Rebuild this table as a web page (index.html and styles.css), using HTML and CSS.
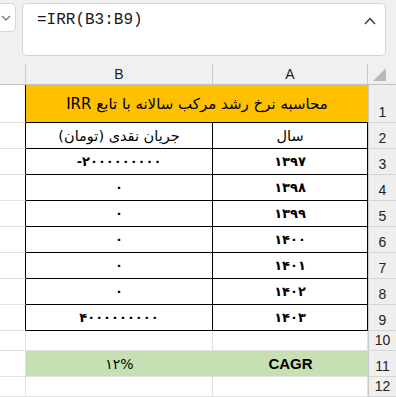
FILE: index.html
```html
<!DOCTYPE html>
<html lang="fa">
<head>
<meta charset="utf-8">
<link rel="stylesheet" href="styles.css">
</head>
<body>
<div class="top">
  <div class="namebox">
    <svg class="chev-down" width="10" height="6" viewBox="0 0 10 6"><path d="M1 1 L5 5 L9 1" fill="none" stroke="#666" stroke-width="1.1"/></svg>
  </div>
  <div class="fx">
    <span class="formula">=IRR(B3:B9)</span>
    <svg class="chev-up" width="12" height="8" viewBox="0 0 12 8"><path d="M1 7 L6 1.5 L11 7" fill="none" stroke="#333" stroke-width="1.3"/></svg>
  </div>
</div>
<div class="sheet">
  <div class="ch"></div><div class="ch">B</div><div class="ch">A</div><div class="ch corner"><span class="tri"></span></div>

  <div class="c edge"></div><div class="title" dir="rtl">محاسبه نرخ رشد مرکب سالانه با تابع IRR</div><div class="rh">1</div>

  <div class="c edge"></div><div class="cell head" dir="rtl">جریان نقدی (تومان)</div><div class="cell head" dir="rtl">سال</div><div class="rh">2</div>
  <div class="c edge"></div><div class="cell num"><span dir="ltr">-۲۰۰۰۰۰۰۰۰۰</span></div><div class="cell num">۱۳۹۷</div><div class="rh">3</div>
  <div class="c edge"></div><div class="cell num">۰</div><div class="cell num">۱۳۹۸</div><div class="rh">4</div>
  <div class="c edge"></div><div class="cell num">۰</div><div class="cell num">۱۳۹۹</div><div class="rh">5</div>
  <div class="c edge"></div><div class="cell num">۰</div><div class="cell num">۱۴۰۰</div><div class="rh">6</div>
  <div class="c edge"></div><div class="cell num">۰</div><div class="cell num">۱۴۰۱</div><div class="rh">7</div>
  <div class="c edge"></div><div class="cell num">۰</div><div class="cell num">۱۴۰۲</div><div class="rh">8</div>
  <div class="c edge"></div><div class="cell num"><span dir="ltr">۴۰۰۰۰۰۰۰۰۰</span></div><div class="cell num">۱۴۰۳</div><div class="rh">9</div>

  <div class="c"></div><div class="c"></div><div class="c"></div><div class="rh">10</div>
  <div class="c"></div><div class="green"><span dir="ltr">۱۲%</span></div><div class="green cagr">CAGR</div><div class="rh">11</div>
  <div class="c"></div><div class="c"></div><div class="c"></div><div class="rh">12</div>
</div>
</body>
</html>
```
FILE: styles.css
```css
* { box-sizing: border-box; }
html, body { margin: 0; padding: 0; }
body {
  width: 396px;
  height: 397px;
  overflow: hidden;
  background: #f0f0f0;
  font-family: "DejaVu Sans", sans-serif;
  color: #000;
}
.top {
  height: 64px;
  display: flex;
  align-items: flex-start;
  padding-top: 3px;
  gap: 6px;
  margin-left: -10px;
}
.namebox {
  width: 26px;
  height: 29px;
  background: #fff;
  border: 1px solid #d6d6d6;
  border-radius: 5px;
  display: flex;
  justify-content: flex-end;
  align-items: center;
  padding-right: 4px;
}
.fx {
  width: 364px;
  height: 53px;
  background: #fff;
  border: 1px solid #d4d4d4;
  border-radius: 5px;
  display: flex;
  justify-content: space-between;
  align-items: flex-start;
  padding: 6px 9px 0 14px;
}
.formula {
  font-family: "Liberation Mono", monospace;
  font-size: 16px;
  line-height: 20px;
  color: #1a1a1a;
}
.chev-up { margin-top: 7px; }
.sheet {
  display: grid;
  grid-template-columns: 26px 187px 155px 28px;
  grid-template-rows: 21px 38px repeat(8, 26px) 20px 26px 20px;
  background: #fff;
}
.ch {
  background: #f0f0f0;
  border-right: 1px solid #c9c9c9;
  border-bottom: 1px solid #c2c2c2;
  font-family: "Liberation Sans", sans-serif;
  font-size: 14px;
  color: #222;
  display: flex;
  align-items: center;
  justify-content: center;
}
.corner {
  border-right: none;
  position: relative;
}
.tri {
  position: absolute;
  right: 10px;
  bottom: 3px;
  width: 0;
  height: 0;
  border-left: 13px solid transparent;
  border-bottom: 13px solid #b8b8b8;
}
.c {
  border-right: 1px solid #e1e1e1;
  border-bottom: 1px solid #e1e1e1;
}
.c.edge { border-right: 1px solid #000; }
.title {
  grid-column: span 2;
  background: #ffc000;
  border-bottom: 1px solid #000;
  display: flex;
  align-items: center;
  justify-content: center;
  font-size: 15px;
}
.cell {
  border-right: 1px solid #000;
  border-bottom: 1px solid #000;
  display: flex;
  align-items: center;
  justify-content: center;
  font-size: 15px;
}
.head { font-size: 14.5px; }
.num { font-weight: bold; font-size: 13px; }
.green {
  background: #c6e0b4;
  border-bottom: 1px solid #e1e1e1;
  display: flex;
  align-items: center;
  justify-content: center;
  font-size: 14px;
}
.cagr {
  font-family: "Liberation Sans", sans-serif;
  font-weight: bold;
  font-size: 15px;
}
.rh {
  background: #efefef;
  border-left: 1px solid #c9c9c9;
  border-bottom: 1px solid #d6d6d6;
  font-family: "Liberation Sans", sans-serif;
  font-size: 14px;
  color: #222;
  display: flex;
  align-items: flex-end;
  justify-content: center;
  padding-bottom: 2px;
}
```
